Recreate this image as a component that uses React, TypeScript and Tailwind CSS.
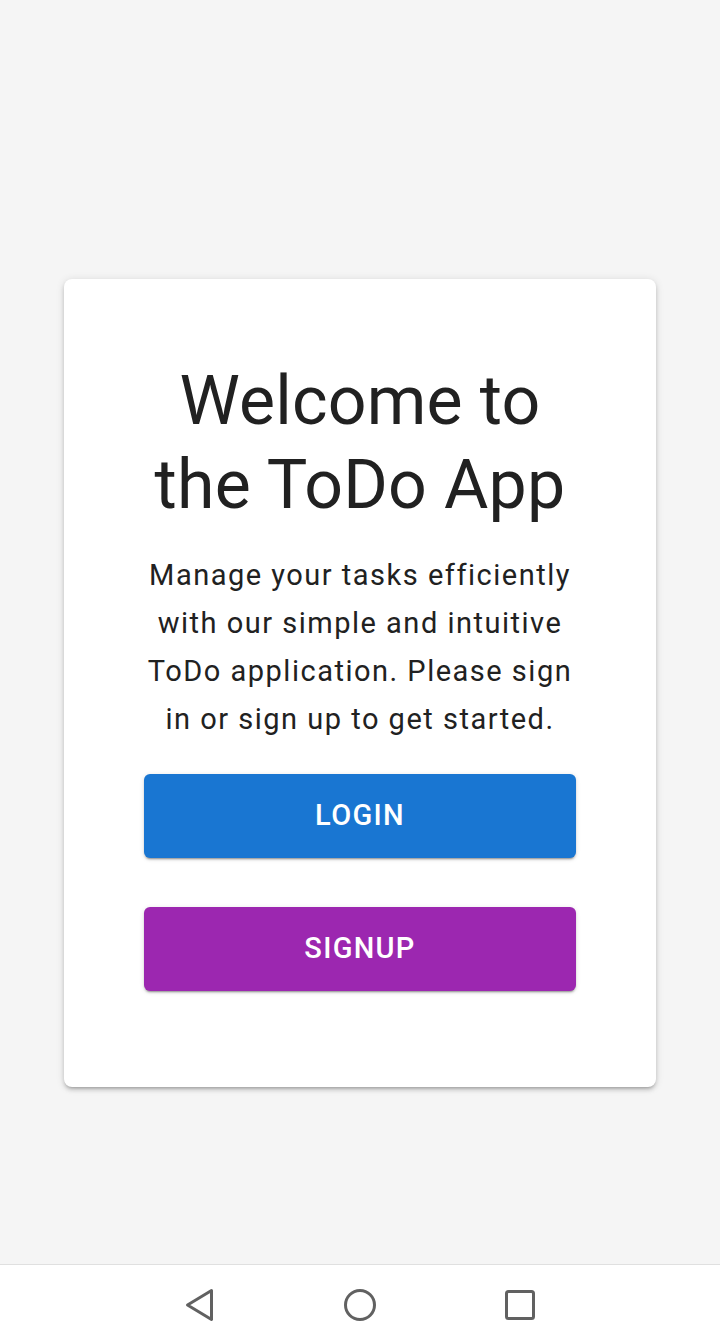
import React from 'react';

// Android system navigation bar
const NavBar = () => (
    <div className="h-[80px] bg-white border-t border-[#e0e0e0] flex items-center justify-center gap-[120px]">
        <svg width="40" height="40" viewBox="0 0 40 40" className="text-[#616161]">
            <path d="M31.5 5.5 L7.5 20 L31.5 34.5 Z" fill="none" stroke="currentColor" strokeWidth="3" strokeLinejoin="round" />
        </svg>
        <svg width="40" height="40" viewBox="0 0 40 40" className="text-[#616161]">
            <circle cx="20" cy="20" r="14.5" fill="none" stroke="currentColor" strokeWidth="3" />
        </svg>
        <svg width="40" height="40" viewBox="0 0 40 40" className="text-[#616161]">
            <rect x="6.5" y="6.5" width="27" height="27" rx="2" fill="none" stroke="currentColor" strokeWidth="3" />
        </svg>
    </div>
);

export default function App() {
    return (
        <div className="min-h-screen h-[1344px] bg-[#f5f5f5] flex flex-col font-['Roboto',sans-serif]">
            <main className="flex-1 px-[64px] pt-[279px]">
                <div className="bg-white rounded-lg h-[808px] px-[80px] pt-[80px] flex flex-col items-stretch shadow-[0_3px_3px_-2px_rgba(0,0,0,0.2),0_3px_4px_0_rgba(0,0,0,0.14),0_1px_8px_0_rgba(0,0,0,0.12)]">
                    <h1 className="text-center text-[68px] leading-[84px] font-normal text-[#212121] tracking-[0.2px]">
                        Welcome to the ToDo App
                    </h1>
                    <p className="mt-[24px] -mx-[4px] text-center text-[29px] leading-[48px] text-[#212121] tracking-[1.5px]">
                        Manage your tasks efficiently with our simple and intuitive ToDo application. Please sign in or sign up to get started.
                    </p>
                    <button className="mt-[31px] h-[84px] rounded-[6px] bg-[#1976d2] text-white text-[29px] font-medium tracking-[1.3px] uppercase shadow-[0_3px_1px_-2px_rgba(0,0,0,0.2),0_2px_2px_0_rgba(0,0,0,0.14),0_1px_5px_0_rgba(0,0,0,0.12)]">
                        Login
                    </button>
                    <button className="mt-[49px] h-[84px] rounded-[6px] bg-[#9c27b0] text-white text-[29px] font-medium tracking-[1.3px] uppercase shadow-[0_3px_1px_-2px_rgba(0,0,0,0.2),0_2px_2px_0_rgba(0,0,0,0.14),0_1px_5px_0_rgba(0,0,0,0.12)]">
                        Signup
                    </button>
                </div>
            </main>
            <NavBar />
        </div>
    );
}
